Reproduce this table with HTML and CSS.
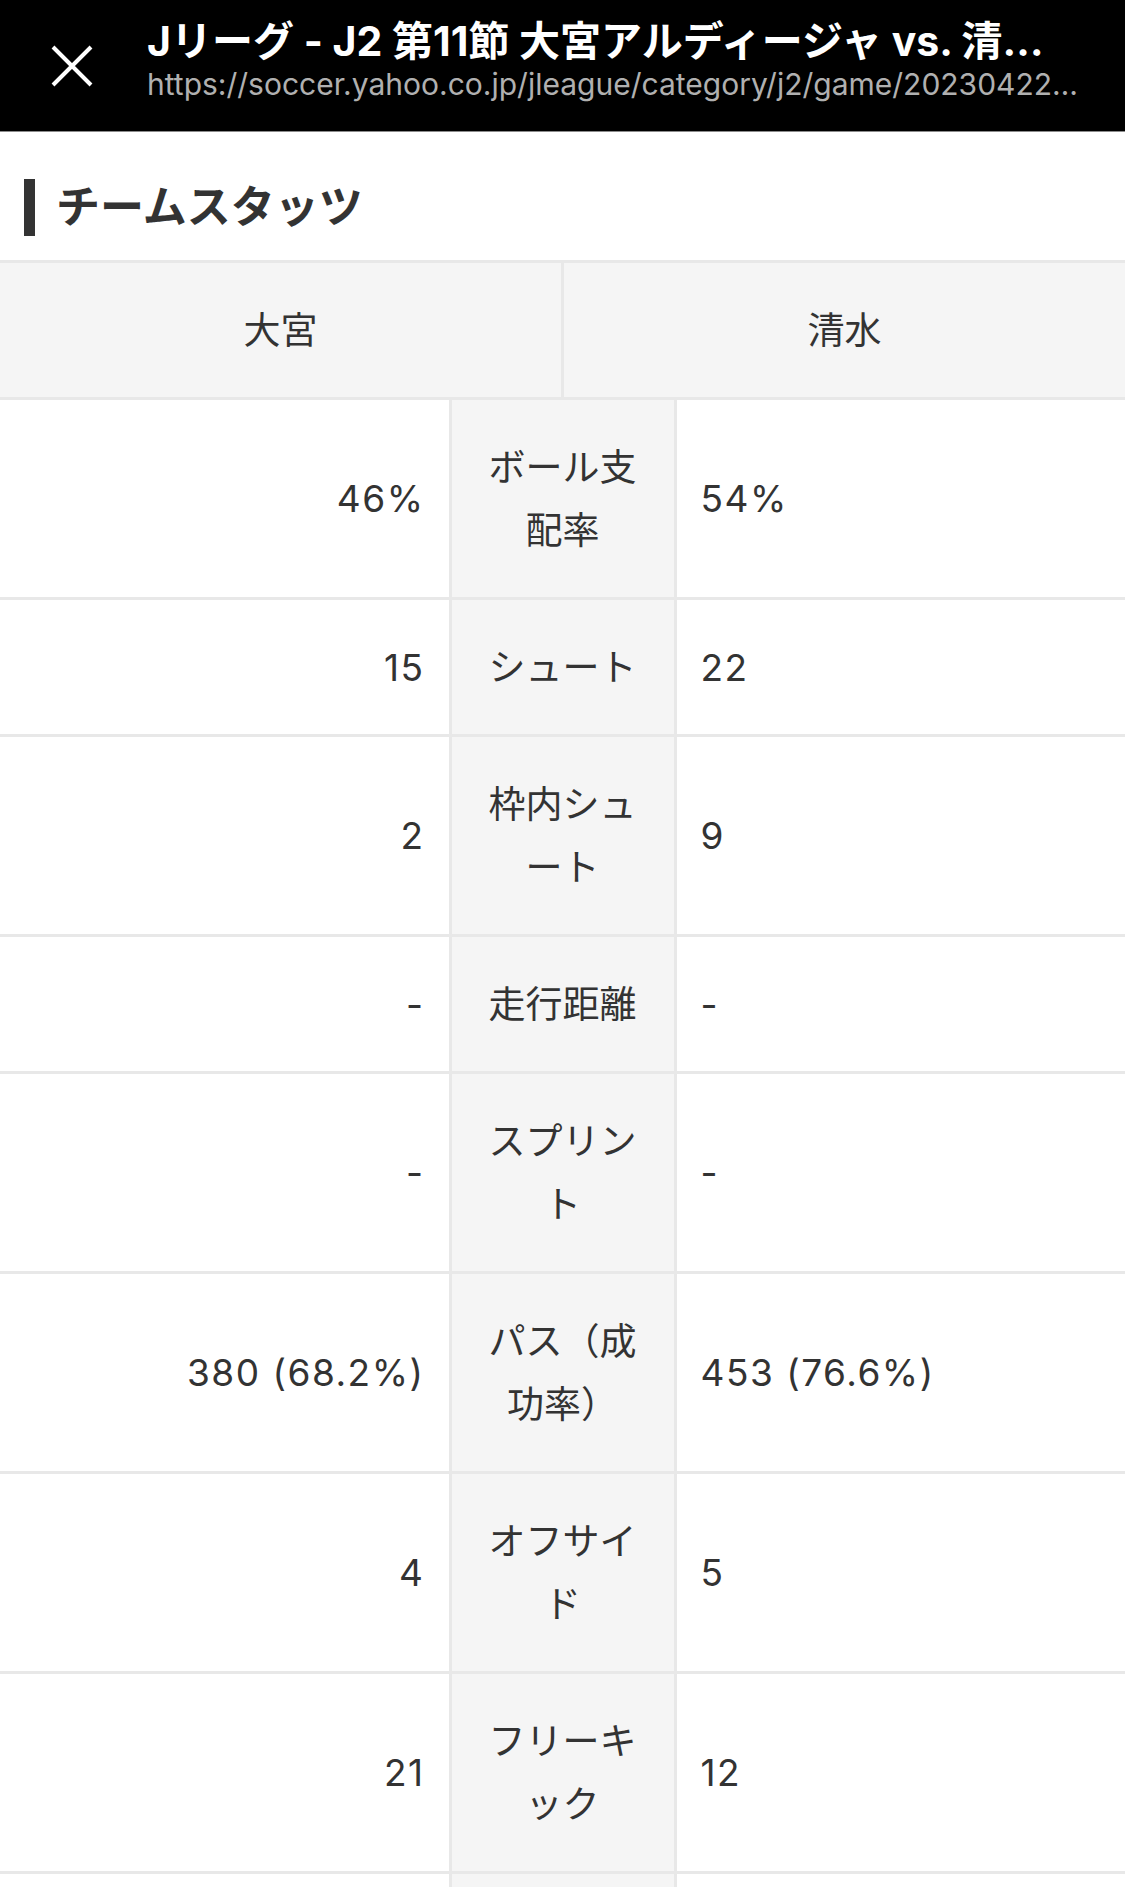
FILE: index.html
```html
<!DOCTYPE html>
<html lang="ja">
<head>
    <meta charset="UTF-8">
    <title>チームスタッツ</title>
    <link rel="stylesheet" href="styles.css">
</head>
<body>

    <!-- ブラウザのシートヘッダー -->
    <header class="sheet-bar">
        <button class="close-btn" aria-label="閉じる">
            <svg width="44" height="44" viewBox="0 0 44 44">
                <path d="M3 3 L41 41 M41 3 L3 41" stroke="#fff" stroke-width="4" fill="none"/>
            </svg>
        </button>
        <div class="sheet-text">
            <div class="sheet-title">Jリーグ - J2 第11節 大宮アルディージャ vs. 清水エスパルス</div>
            <div class="sheet-url">https://soccer.yahoo.co.jp/jleague/category/j2/game/2023042211/stats</div>
        </div>
    </header>

    <main>
        <h2 class="section-title"><span>チームスタッツ</span></h2>

        <div class="team-row">
            <div class="team-cell">大宮</div>
            <div class="team-cell">清水</div>
        </div>

        <table class="stats-table">
            <colgroup>
                <col class="col-home">
                <col class="col-label">
                <col class="col-away">
            </colgroup>
            <tbody>
                <tr>
                    <td class="home">46%</td>
                    <td class="label">ボール支配率</td>
                    <td class="away">54%</td>
                </tr>
                <tr>
                    <td class="home">15</td>
                    <td class="label">シュート</td>
                    <td class="away">22</td>
                </tr>
                <tr>
                    <td class="home">2</td>
                    <td class="label">枠内シュート</td>
                    <td class="away">9</td>
                </tr>
                <tr>
                    <td class="home">-</td>
                    <td class="label">走行距離</td>
                    <td class="away">-</td>
                </tr>
                <tr>
                    <td class="home">-</td>
                    <td class="label">スプリント</td>
                    <td class="away">-</td>
                </tr>
                <tr>
                    <td class="home">380 (68.2%)</td>
                    <td class="label">パス（成功率）</td>
                    <td class="away">453 (76.6%)</td>
                </tr>
                <tr>
                    <td class="home">4</td>
                    <td class="label">オフサイド</td>
                    <td class="away">5</td>
                </tr>
                <tr>
                    <td class="home">21</td>
                    <td class="label">フリーキック</td>
                    <td class="away">12</td>
                </tr>
                <tr>
                    <td class="home">-</td>
                    <td class="label">コーナーキック</td>
                    <td class="away">-</td>
                </tr>
            </tbody>
        </table>
    </main>

</body>
</html>
```

FILE: styles.css
```css
body {
    margin: 0;
    background-color: #ffffff;
    font-family: Inter, "Noto Sans CJK JP", sans-serif;
    color: #333333;
}

/* ヘッダー */
.sheet-bar {
    display: flex;
    align-items: flex-start;
    height: 131px;
    background-color: #000000;
    border-bottom: 1px solid #8c8c8c;
}

.close-btn {
    margin: 44px 0 0 50px;
    padding: 0;
    width: 44px;
    height: 44px;
    background: none;
    border: none;
}

.close-btn svg {
    display: block;
}

.sheet-text {
    min-width: 0;
    flex: 1;
    margin-left: 53px;
    padding: 16px 44px 0 0;
}

.sheet-title,
.sheet-url {
    white-space: nowrap;
    overflow: hidden;
    text-overflow: ellipsis;
}

.sheet-title {
    margin-right: 32px;
    color: #ffffff;
    font-size: 41px;
    font-weight: bold;
    line-height: 50px;
}

.sheet-url {
    color: #b0b0b0;
    font-size: 30px;
    line-height: 36px;
}

/* 見出し */
.section-title {
    margin: 0;
    padding: 47px 0 24px 24px;
    font-size: 44px;
    font-weight: bold;
    line-height: 57px;
}

.section-title span {
    display: block;
    border-left: 11px solid #333333;
    padding-left: 21px;
}

/* チーム名 */
.team-row {
    display: grid;
    grid-template-columns: 1fr 1fr;
    gap: 3px;
    background-color: #e8e8e8;
    border-top: 3px solid #e8e8e8;
    border-bottom: 3px solid #e8e8e8;
}

.team-cell {
    background-color: #f5f5f5;
    text-align: center;
    font-size: 37px;
    line-height: 63px;
    padding: 35.5px 0;
}

/* スタッツ表 */
.stats-table {
    width: 100%;
    table-layout: fixed;
    border-collapse: collapse;
    font-size: 37px;
    line-height: 63px;
}

.col-home,
.col-away {
    width: 40%;
}

.col-label {
    width: 20%;
}

.stats-table td {
    border: 3px solid #e8e8e8;
    border-top: none;
    padding: 35.5px 24px;
    vertical-align: middle;
}

.stats-table td.home {
    border-left: none;
    text-align: right;
    letter-spacing: 1.5px;
}

.stats-table td.away {
    border-right: none;
    text-align: left;
    letter-spacing: 1.5px;
}

.stats-table td.label {
    background-color: #f5f5f5;
    text-align: center;
    line-break: normal;
}
```
